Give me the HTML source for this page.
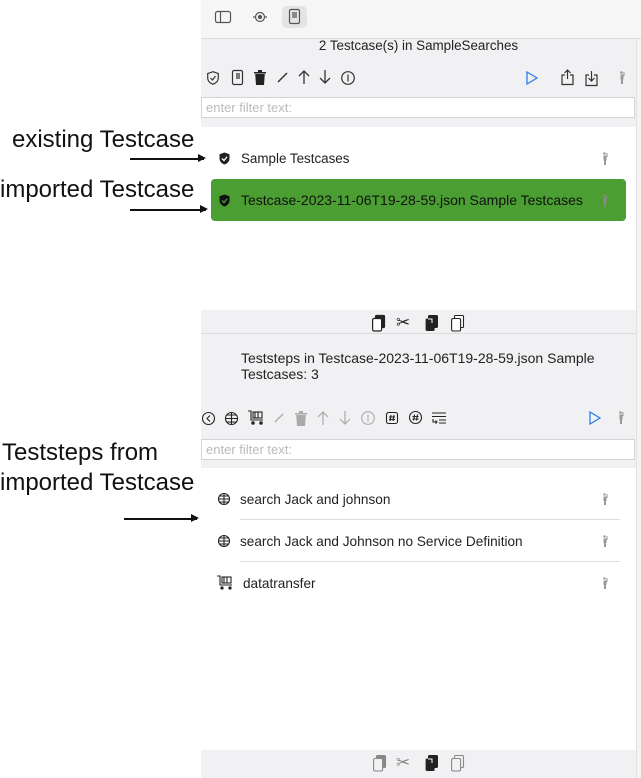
<!DOCTYPE html>
<html><head><meta charset="utf-8"><style>
*{margin:0;padding:0;box-sizing:border-box}
body{width:641px;height:778px;background:#fff;position:relative;overflow:hidden;font-family:"Liberation Sans",Arial,sans-serif;color:#222}
.a{position:absolute}
.ann{position:absolute;font-size:24px;color:#111;line-height:26px;white-space:nowrap}
.arrow{position:absolute;height:1.5px;background:#111}
.arrow:after{content:"";position:absolute;right:-2px;top:-4px;border-left:8px solid #111;border-top:4.5px solid transparent;border-bottom:4.5px solid transparent}
.t{position:absolute;font-size:13.4px;white-space:nowrap}
.filter{position:absolute;left:201px;width:434px;height:21px;background:#fff;border:1px solid #d4d4d4;font-size:13px;color:#bbb;padding:2px 4px;line-height:15px}
svg{position:absolute;overflow:visible}
</style></head><body>
<div class="a" style="left:201px;top:0;width:440px;height:38px;background:#f6f6f6"></div>
<div class="a" style="left:201px;top:38px;width:440px;height:1px;background:#ddd"></div>
<div class="a" style="left:201px;top:39px;width:435px;height:88px;background:#f1f1f3"></div>
<div class="a" style="left:201px;top:310px;width:435px;height:158px;background:#f1f1f3"></div>
<div class="a" style="left:201px;top:333px;width:435px;height:1px;background:#dcdcdc"></div>
<div class="a" style="left:201px;top:750px;width:435px;height:28px;background:#f1f1f3"></div>
<div class="a" style="left:636px;top:39px;width:5px;height:739px;background:#f4f4f4;border-left:1px solid #e2e2e2"></div>

<div class="ann" style="left:12px;top:127px">existing Testcase</div>
<div class="arrow" style="left:130px;top:158px;width:74px"></div>
<div class="ann" style="left:0px;top:177px">imported Testcase</div>
<div class="arrow" style="left:130px;top:209px;width:76px"></div>
<div class="ann" style="left:2px;top:440px">Teststeps from</div>
<div class="ann" style="left:0px;top:470px">imported Testcase</div>
<div class="arrow" style="left:124px;top:518px;width:73px"></div>

<div class="a" style="left:282px;top:6px;width:25px;height:22px;background:#e4e4e4;border-radius:5px"></div>
<svg style="left:215px;top:11px" width="16" height="12" fill="none" stroke="#555" stroke-width="1.2"><rect x="0.5" y="0.5" width="15" height="11" rx="2"/><line x1="5.5" y1="1" x2="5.5" y2="11"/></svg>
<svg style="left:252px;top:9px" width="16" height="16" fill="none" stroke="#555" stroke-width="1.2"><circle cx="8" cy="8" r="4.5"/><circle cx="8" cy="8" r="1.5" fill="#555"/><path d="M1 8h2M13 8h2"/></svg>
<svg style="left:289px;top:9px" width="11" height="15" fill="none" stroke="#555" stroke-width="1.2"><rect x="0.5" y="0.5" width="10" height="14" rx="1.5"/><path d="M3 4h5M3 6h5M3 8h5"/></svg>

<div class="t" style="left:201px;width:435px;text-align:center;top:38px;font-size:13.4px">2 Testcase(s) in SampleSearches</div>

<svg style="left:207px;top:71px" width="12" height="14" fill="none" stroke="#333" stroke-width="1.2"><path d="M6 0.7L11.3 2.5V7c0 3-2.5 5.2-5.3 6.3C3.2 12.2 0.7 10 0.7 7V2.5z"/><path d="M3.5 7l2 2 3-4"/></svg>
<svg style="left:232px;top:70px" width="11" height="15" fill="none" stroke="#333" stroke-width="1.2"><rect x="0.5" y="0.5" width="10" height="14" rx="1.5"/><path d="M4 4h4M4 6h4M4 8h4"/></svg>
<svg style="left:254px;top:70px" width="12" height="15" fill="#222"><rect x="0" y="2" width="12" height="1.5"/><rect x="4" y="0" width="4" height="2"/><path d="M1.2 4h9.6l-0.8 11H2z"/></svg>
<svg style="left:277px;top:72px" width="11" height="11" stroke="#333" stroke-width="1.5"><line x1="1" y1="10" x2="10" y2="1"/></svg>
<svg style="left:298px;top:70px" width="12" height="14" fill="none" stroke="#333" stroke-width="1.3"><path d="M6 14V1M1 6l5-5 5 5"/></svg>
<svg style="left:319px;top:70px" width="12" height="14" fill="none" stroke="#333" stroke-width="1.3"><path d="M6 0v13M1 8l5 5 5-5"/></svg>
<svg style="left:341px;top:71px" width="14" height="14" fill="none" stroke="#333" stroke-width="1.2"><circle cx="7" cy="7" r="6.3"/><line x1="7" y1="3.5" x2="7" y2="10.5"/></svg>
<svg style="left:526px;top:71px" width="12" height="14" fill="none" stroke="#2a7ef0" stroke-width="1.3"><path d="M1 1l10 6-10 6z"/></svg>
<svg style="left:561px;top:69px" width="13" height="16" fill="none" stroke="#333" stroke-width="1.2"><path d="M4 6H1v9.5h11V6H9M6.5 10V1M3.5 4l3-3 3 3"/></svg>
<svg style="left:585px;top:70px" width="13" height="16" fill="none" stroke="#333" stroke-width="1.2"><path d="M4 5H1v10.5h11V5H9M6.5 1v10M3.5 8l3 3 3-3"/></svg>
<svg style="left:619px;top:71px" width="7" height="13" fill="#999"><circle cx="2.5" cy="1.5" r="1.3"/><rect x="1.5" y="3.5" width="3" height="5"/><rect x="2" y="8" width="2" height="5"/><rect x="4.5" y="1" width="1" height="4"/></svg>

<div class="filter" style="top:97px">enter filter text:</div>

<svg style="left:219px;top:152px" width="11" height="13"><path d="M5.5 0.5L10.5 2.3V6.5c0 3-2.3 5-5 6C2.8 11.5 0.5 9.5 0.5 6.5V2.3z" fill="#222"/><path d="M3 6.5l2 2 3-3.7" stroke="#fff" stroke-width="1.3" fill="none"/></svg>
<div class="t" style="left:241px;top:151px">Sample Testcases</div>
<svg style="left:602px;top:152px" width="7" height="13" fill="#999"><circle cx="2.5" cy="1.5" r="1.3"/><rect x="1.5" y="3.5" width="3" height="5"/><rect x="2" y="8" width="2" height="5"/><rect x="4.5" y="1" width="1" height="4"/></svg>

<div class="a" style="left:211px;top:179px;width:415px;height:42px;background:#4a9e32;border-radius:4px"></div>
<svg style="left:219px;top:194px" width="11" height="13"><path d="M5.5 0.5L10.5 2.3V6.5c0 3-2.3 5-5 6C2.8 11.5 0.5 9.5 0.5 6.5V2.3z" fill="#111"/><path d="M3 6.5l2 2 3-3.7" stroke="#4a9e32" stroke-width="1.3" fill="none"/></svg>
<div class="t" style="left:241px;top:192px;color:#111;font-size:14px">Testcase-2023-11-06T19-28-59.json Sample Testcases</div>
<svg style="left:602px;top:194px" width="7" height="13" fill="#8a8a8a"><circle cx="2.5" cy="1.5" r="1.3"/><rect x="1.5" y="3.5" width="3" height="5"/><rect x="2" y="8" width="2" height="5"/><rect x="4.5" y="1" width="1" height="4"/></svg>

<svg style="left:372px;top:315px" width="14" height="17" stroke="#222" stroke-width="1.2"><rect x="3.5" y="0.5" width="9" height="12" rx="1" fill="#222"/><rect x="0.6" y="3.5" width="9" height="12.5" rx="1.5" fill="#fff"/></svg>
<div class="t" style="left:396px;top:313px;font-size:17px;color:#222">✂</div>
<svg style="left:425px;top:315px" width="14" height="17"><rect x="3.5" y="0.5" width="9" height="12" rx="1" fill="#222" stroke="#222"/><rect x="0.6" y="3.5" width="9" height="12.5" rx="1.5" fill="#222"/><path d="M3 4l4 0 0 4" stroke="#fff" fill="none"/></svg>
<svg style="left:451px;top:315px" width="14" height="17" fill="#fff" stroke="#222" stroke-width="1.1"><rect x="3.5" y="0.5" width="9" height="12" rx="1"/><rect x="0.6" y="3.5" width="9" height="12.5" rx="1.5"/></svg>

<div class="t" style="left:241px;top:350px;line-height:16px;font-size:14px">Teststeps in Testcase-2023-11-06T19-28-59.json Sample<br>Testcases: 3</div>

<svg style="left:202px;top:412px" width="13" height="13" fill="none" stroke="#222" stroke-width="1.1"><circle cx="6.5" cy="6.5" r="6"/><path d="M8 3.5L5 6.5 8 9.5"/></svg>
<svg style="left:225px;top:412px" width="13" height="13" fill="none" stroke="#222" stroke-width="1.1"><circle cx="6.5" cy="6.5" r="6"/><path d="M0.5 6.5h12M6.5 0.5v12M2 3h9M2 10h9"/></svg>
<svg style="left:248px;top:410px" width="16" height="16" fill="none" stroke="#222" stroke-width="1.1"><path d="M0 1h3v9h12"/><rect x="5" y="2" width="9" height="6"/><path d="M7 2v6M10 2v6"/><circle cx="5" cy="13" r="1.2" fill="#222"/><circle cx="13" cy="13" r="1.2" fill="#222"/></svg>
<svg style="left:274px;top:413px" width="10" height="10" stroke="#aaa" stroke-width="1.3"><line x1="1" y1="9" x2="9" y2="1"/></svg>
<svg style="left:295px;top:411px" width="12" height="15" fill="#aaa"><rect x="0" y="2" width="12" height="1.5"/><rect x="4" y="0" width="4" height="2"/><path d="M1.2 4h9.6l-0.8 11H2z"/></svg>
<svg style="left:317px;top:411px" width="12" height="14" fill="none" stroke="#aaa" stroke-width="1.2"><path d="M6 14V1M1 6l5-5 5 5"/></svg>
<svg style="left:339px;top:411px" width="12" height="14" fill="none" stroke="#aaa" stroke-width="1.2"><path d="M6 0v13M1 8l5 5 5-5"/></svg>
<svg style="left:361px;top:411px" width="14" height="14" fill="none" stroke="#aaa" stroke-width="1.1"><circle cx="7" cy="7" r="6.3"/><line x1="7" y1="3.5" x2="7" y2="10.5"/></svg>
<svg style="left:386px;top:412px" width="12" height="12" fill="none" stroke="#222" stroke-width="1.1"><rect x="0.5" y="0.5" width="11" height="11" rx="2"/><path d="M5 3l-1 6M8 3l-1 6M3 5h6M3 7.5h6"/></svg>
<svg style="left:409px;top:411px" width="13" height="13" fill="none" stroke="#222" stroke-width="1.1"><circle cx="6.5" cy="6.5" r="6"/><path d="M5.5 3.5l-1 6M8.5 3.5l-1 6M3.5 5.5h6M3.5 8h6"/></svg>
<svg style="left:432px;top:412px" width="14" height="12" fill="none" stroke="#222" stroke-width="1.1"><path d="M0 1h14M0 4.5h14M7 8h7M7 11h7M1 7v3h4M3.5 8.5L5 10 3.5 11.5"/></svg>
<svg style="left:589px;top:411px" width="12" height="14" fill="none" stroke="#2a7ef0" stroke-width="1.3"><path d="M1 1l10 6-10 6z"/></svg>
<svg style="left:618px;top:411px" width="7" height="13" fill="#999"><circle cx="2.5" cy="1.5" r="1.3"/><rect x="1.5" y="3.5" width="3" height="5"/><rect x="2" y="8" width="2" height="5"/><rect x="4.5" y="1" width="1" height="4"/></svg>

<div class="filter" style="top:439px">enter filter text:</div>

<svg style="left:218px;top:493px" width="12" height="12" fill="none" stroke="#222" stroke-width="1.1"><circle cx="6" cy="6" r="5.5"/><path d="M0.5 6h11M6 0.5v11M1.5 3h9M1.5 9h9"/></svg>
<div class="t" style="left:240px;top:492px;font-size:13.6px">search Jack and johnson</div>
<svg style="left:602px;top:493px" width="7" height="12" fill="#999"><circle cx="2.5" cy="1.5" r="1.2"/><rect x="1.5" y="3.5" width="3" height="4.5"/><rect x="2" y="7.5" width="2" height="4.5"/><rect x="4.5" y="1" width="1" height="4"/></svg>
<div class="a" style="left:240px;top:519px;width:380px;height:1px;background:#ddd"></div>
<svg style="left:218px;top:535px" width="12" height="12" fill="none" stroke="#222" stroke-width="1.1"><circle cx="6" cy="6" r="5.5"/><path d="M0.5 6h11M6 0.5v11M1.5 3h9M1.5 9h9"/></svg>
<div class="t" style="left:240px;top:534px;font-size:13.6px">search Jack and Johnson no Service Definition</div>
<svg style="left:602px;top:535px" width="7" height="12" fill="#999"><circle cx="2.5" cy="1.5" r="1.2"/><rect x="1.5" y="3.5" width="3" height="4.5"/><rect x="2" y="7.5" width="2" height="4.5"/><rect x="4.5" y="1" width="1" height="4"/></svg>
<div class="a" style="left:240px;top:561px;width:380px;height:1px;background:#ddd"></div>
<svg style="left:217px;top:575px" width="16" height="15" fill="none" stroke="#222" stroke-width="1.1"><path d="M0 1h3v9h12"/><rect x="5" y="2" width="9" height="6"/><path d="M7 2v6M10 2v6"/><circle cx="5" cy="13" r="1.1" fill="#222"/><circle cx="13" cy="13" r="1.1" fill="#222"/></svg>
<div class="t" style="left:243px;top:576px;font-size:13.6px">datatransfer</div>
<svg style="left:602px;top:577px" width="7" height="12" fill="#999"><circle cx="2.5" cy="1.5" r="1.2"/><rect x="1.5" y="3.5" width="3" height="4.5"/><rect x="2" y="7.5" width="2" height="4.5"/><rect x="4.5" y="1" width="1" height="4"/></svg>

<svg style="left:373px;top:755px" width="14" height="17" stroke="#888" stroke-width="1.1"><rect x="3.5" y="0.5" width="9" height="12" rx="1" fill="#888"/><rect x="0.6" y="3.5" width="9" height="12.5" rx="1.5" fill="#f1f1f3"/></svg>
<div class="t" style="left:396px;top:753px;font-size:17px;color:#888">✂</div>
<svg style="left:425px;top:755px" width="14" height="17"><rect x="3.5" y="0.5" width="9" height="12" rx="1" fill="#222" stroke="#222"/><rect x="0.6" y="3.5" width="9" height="12.5" rx="1.5" fill="#222"/><path d="M3 4l4 0 0 4" stroke="#fff" fill="none"/></svg>
<svg style="left:451px;top:755px" width="14" height="17" fill="#f1f1f3" stroke="#888" stroke-width="1.1"><rect x="3.5" y="0.5" width="9" height="12" rx="1"/><rect x="0.6" y="3.5" width="9" height="12.5" rx="1.5"/></svg>
</body></html>
